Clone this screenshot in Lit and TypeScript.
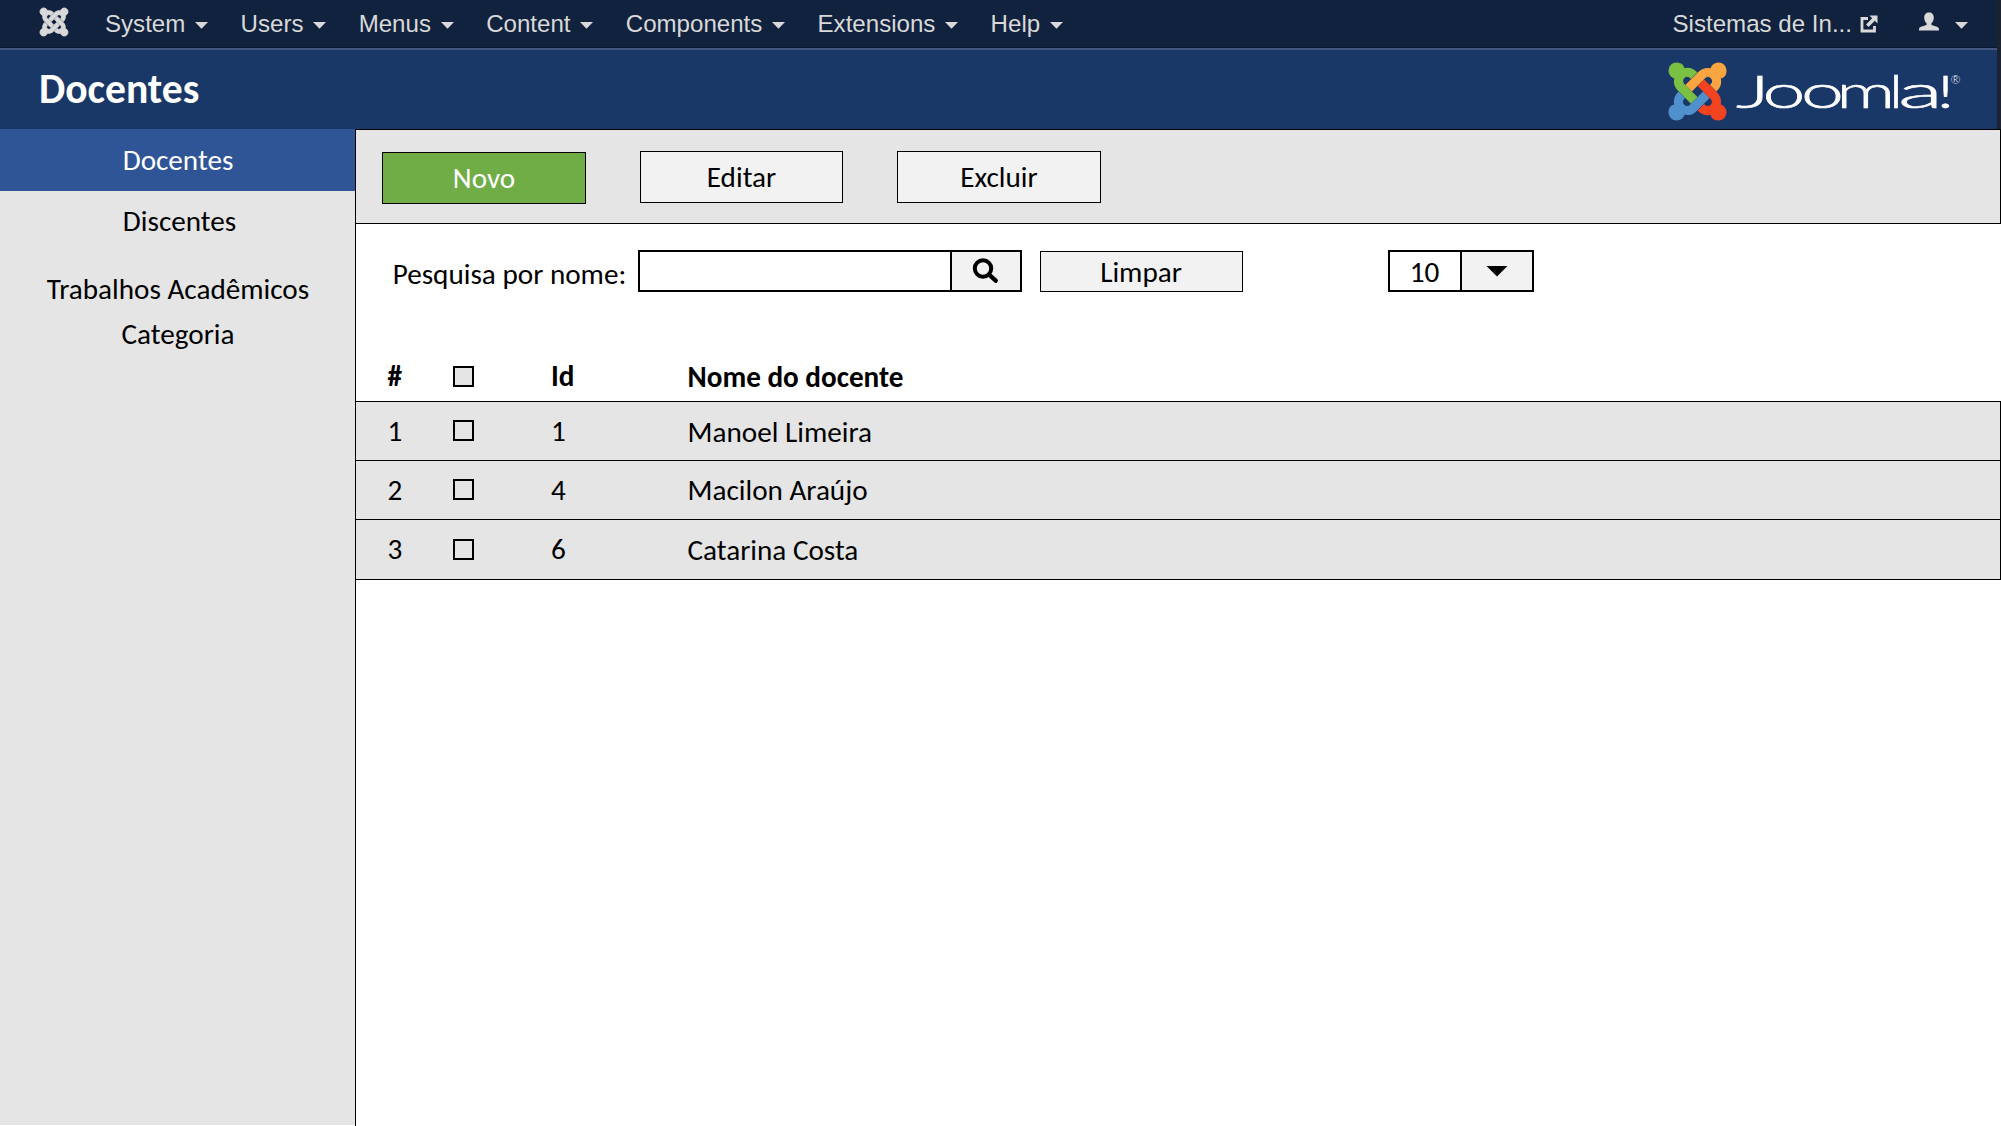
import { LitElement, html, css, svg } from "lit";
import { customElement, state } from "lit/decorators.js";

interface Teacher {
  id: number;
  name: string;
}

const MENUS = ["System", "Users", "Menus", "Content", "Components", "Extensions", "Help"];

const TEACHERS: Teacher[] = [
  { id: 1, name: "Manoel Limeira" },
  { id: 4, name: "Macilon Araújo" },
  { id: 6, name: "Catarina Costa" },
];

// One arm of the Joomla knot; the other three are quarter turns of it.
const ARM =
  "M16.719 14.759L14.22 17.26l-2.37 2.37-.462.466c-1.368 1.365-3.297 1.83-5.047 1.397-.327 1.424-1.604 2.49-3.13 2.49C1.438 23.983 0 22.547 0 20.772c0-1.518 1.055-2.789 2.469-3.123-.446-1.76.016-3.705 1.396-5.08l.179-.18 2.37 2.37-.184.181c-.769.779-.769 2.024 0 2.789.771.78 2.022.78 2.787 0l.465-.465 2.367-2.371 2.502-2.506z";

const knot = (cls: string, colors: string[]) => html`
  <svg class="knot ${cls}" viewBox="0 0 24 24">
    ${colors.map(
      (c, i) => svg`<path d=${ARM} fill=${c} stroke=${c} transform="rotate(${i * 90} 12 12)"></path>`,
    )}
  </svg>
`;

const caret = html`<svg class="caret" viewBox="0 0 13 7"><path d="M0 0h13L6.5 6.8z" fill="#d9d9d9"></path></svg>`;

@customElement("app-root")
export class AppRoot extends LitElement {
  @state() private active = "Docentes";

  static styles = css`
    :host {
      display: block;
      width: 2001px;
      height: 1126px;
      overflow: hidden;
      background: #fff;
      color: #000;
      font: 29.18px/35px Carlito, Calibri, Lato, sans-serif;
    }
    * {
      box-sizing: border-box;
    }
    svg {
      display: block;
      flex: none;
    }
    .page {
      display: flex;
      flex-direction: column;
      height: 1126px;
    }
    .top {
      background: #1a3867;
      border-right: 4px solid #1b2230;
      height: 129px;
      flex: none;
    }
    .menubar {
      display: flex;
      align-items: flex-start;
      height: 50px;
      padding: 10px 29px 0 40px;
      background: linear-gradient(#10223e 0 47px, #0b1730 47px 48px, #415782 48px 50px);
      color: #d9d9d9;
      font: 24.1px/27px "Liberation Sans", Arial, sans-serif;
    }
    .knot {
      overflow: visible;
      stroke-width: 0.5;
    }
    .brand {
      width: 28px;
      height: 28px;
      margin: -2px 37px 0 0;
      stroke-width: 0.8;
    }
    .menu {
      display: flex;
      margin-right: 32.5px;
    }
    .caret {
      width: 13px;
      height: 7px;
      margin: 12px 0 0 9.7px;
    }
    .site {
      display: flex;
      margin-left: auto;
    }
    .external {
      width: 18px;
      height: 18px;
      margin: 5px 41px 0 8px;
    }
    .user {
      width: 20px;
      height: 19px;
      margin-top: 2px;
    }
    .site .caret {
      margin-left: 16px;
    }
    .banner {
      display: flex;
      justify-content: space-between;
      align-items: flex-start;
      height: 79px;
      padding: 17px 35px 0 39px;
    }
    h1 {
      margin: 0;
      color: #fff;
      font-size: 41.6px;
      line-height: 43px;
      font-weight: 700;
    }
    .logo {
      display: flex;
      margin-top: -4px;
    }
    .mark {
      width: 57px;
      height: 57px;
      margin-right: 10px;
    }
    .word {
      width: 226px;
      height: 58px;
    }
    .word text {
      fill: #fff;
      font-family: Lato, sans-serif;
      font-weight: 300;
    }
    .wordmark {
      stroke: #fff;
      stroke-width: 0.6;
    }
    .body {
      display: flex;
      flex: 1;
    }
    .side {
      width: 355px;
      height: 996px;
      background: #e5e5e5;
      text-align: center;
      flex: none;
    }
    .item {
      padding-left: 1px;
    }
    .item.active {
      height: 62px;
      padding-top: 14px;
      background: #2f5597;
      color: #fff;
    }
    .item.discentes {
      padding: 13px 0 0 4px;
    }
    .item.trabalhos {
      padding-top: 33px;
    }
    .item.categoria {
      padding-top: 10px;
    }
    .main {
      flex: 1;
      border-left: 1px solid #000;
    }
    .toolbar {
      display: flex;
      height: 95px;
      padding: 21px 0 0 26px;
      background: #e5e5e5;
      border: solid #000;
      border-width: 1px 1px 1px 0;
    }
    .btn {
      width: 203px;
      height: 52px;
      padding-top: 8px;
      border: 1px solid #000;
      background: #f2f2f2;
      text-align: center;
    }
    .btn.new {
      width: 204px;
      margin: 1px 54px 0 0;
      background: #70ad47;
      color: #fff;
    }
    .btn.delete {
      width: 204px;
      margin-left: 54px;
    }
    .filters {
      display: flex;
      align-items: flex-start;
      height: 128px;
      padding: 26px 0 0 36px;
    }
    .label {
      width: 246px;
      padding: 7px 0 0 0.7px;
      white-space: nowrap;
    }
    .group {
      display: flex;
      height: 42px;
      border: 2px solid #000;
    }
    .field {
      width: 310px;
      background: #fff;
    }
    .addon {
      display: flex;
      align-items: flex-start;
      border-left: 2px solid #000;
      background: #f2f2f2;
    }
    .search {
      width: 68px;
      height: 38px;
    }
    .btn.clear {
      height: 41px;
      margin: 1px 145px 0 18px;
      padding: 3px 1px 0 0;
    }
    .count {
      width: 70px;
      padding: 3px 1px 0 0;
      text-align: center;
    }
    .drop {
      width: 70px;
      height: 38px;
    }
    .row {
      display: grid;
      grid-template-columns: 65.5px 98px 136.5px 1fr;
      align-items: start;
      height: 59px;
      padding-left: 31.5px;
      background: #e5e5e5;
      border: solid #000;
      border-width: 1px 1px 0 0;
    }
    .row.last {
      height: 61px;
      border-bottom-width: 1px;
    }
    .row.head {
      height: 49px;
      border: 0;
      background: none;
      font-weight: 700;
    }
    .cell {
      padding-top: 12px;
    }
    .name {
      padding-top: 13px;
    }
    .name.mid {
      padding-top: 12px;
    }
    .head .cell {
      padding-top: 7px;
    }
    .head .name {
      padding-top: 8px;
    }
    .check {
      width: 21px;
      height: 21px;
      margin-top: 18px;
      border: 2px solid #000;
    }
    .last .check {
      margin-top: 19px;
    }
    .head .check {
      margin-top: 14px;
      background: #e5e5e5;
    }
  `;

  private item(label: string, cls: string) {
    return html`<div
      class="item ${cls} ${this.active === label ? "active" : ""}"
      @click=${() => (this.active = label)}
    >${label}</div>`;
  }

  private row(t: Teacher, i: number) {
    const last = i === TEACHERS.length - 1;
    return html`
      <div class="row ${last ? "last" : ""}">
        <div class="cell">${i + 1}</div>
        <div class="check"></div>
        <div class="cell">${t.id}</div>
        <div class="name ${i === 1 ? "mid" : ""}">${t.name}</div>
      </div>
    `;
  }

  render() {
    return html`
      <div class="page">
        <header class="top">
          <nav class="menubar">
            ${knot("brand", ["#d9d9d9", "#d9d9d9", "#d9d9d9", "#d9d9d9"])}
            ${MENUS.map((m) => html`<div class="menu">${m}${caret}</div>`)}
            <div class="site">
              Sistemas de In...
              <svg class="external" viewBox="0 0 18 18">
                <path d="M8 3.5H2V16h12.5v-5" fill="none" stroke="#d9d9d9" stroke-width="2.8"></path>
                <path d="M9.5 0.5H17.5V8.5L14.8 5.8L8.6 12L6 9.4L12.2 3.2z" fill="#d9d9d9"></path>
              </svg>
              <svg class="user" viewBox="0 0 20 19">
                <path
                  d="M10 0.5c3 0 4.8 2.1 4.8 5 0 2.6-1 4.6-2.4 5.8v1.5c1 1 6.6 1.7 7.3 3.3.3.7.3 1.6.3 2.4H0c0-.8 0-1.7.3-2.4.7-1.6 6.3-2.300 7.300-3.300v-1.500C6.200 10.100 5.200 8.100 5.200 5.500c0-2.900 1.800-5 4.800-5z"
                  fill="#d9d9d9"
                ></path>
              </svg>
              ${caret}
            </div>
          </nav>
          <div class="banner">
            <h1>Docentes</h1>
            <div class="logo">
              ${knot("mark", ["#5091cd", "#7ac143", "#f9a541", "#f44321"])}
              <svg class="word" viewBox="0 0 226 58">
                <text class="wordmark" y="44.8" font-size="46"
                  ><tspan x="0" textLength="34" lengthAdjust="spacingAndGlyphs">J</tspan
                  ><tspan x="26.5" textLength="43" lengthAdjust="spacingAndGlyphs">o</tspan
                  ><tspan x="65" textLength="43" lengthAdjust="spacingAndGlyphs">o</tspan
                  ><tspan x="100.5" textLength="58.5" lengthAdjust="spacingAndGlyphs">m</tspan
                  ><tspan x="153.5" textLength="13" lengthAdjust="spacingAndGlyphs">l</tspan
                  ><tspan x="162" textLength="45" lengthAdjust="spacingAndGlyphs">a</tspan
                  ><tspan x="200.5" textLength="18" lengthAdjust="spacingAndGlyphs">!</tspan
                ></text>
                <text x="214.5" y="20.5" font-size="12">®</text>
              </svg>
            </div>
          </div>
        </header>
        <div class="body">
          <aside class="side">
            ${this.item("Docentes", "docentes")} ${this.item("Discentes", "discentes")}
            ${this.item("Trabalhos Acadêmicos", "trabalhos")} ${this.item("Categoria", "categoria")}
          </aside>
          <main class="main">
            <div class="toolbar">
              <div class="btn new">Novo</div>
              <div class="btn">Editar</div>
              <div class="btn delete">Excluir</div>
            </div>
            <div class="filters">
              <div class="label">Pesquisa por nome:</div>
              <div class="group">
                <div class="field"></div>
                <div class="addon">
                  <svg class="search" viewBox="0 0 68 38">
                    <circle cx="31" cy="16.5" r="8.2" fill="none" stroke="#000" stroke-width="4"></circle>
                    <path d="M37 22.5L43.7 28.7" stroke="#000" stroke-width="4.4" stroke-linecap="round"></path>
                  </svg>
                </div>
              </div>
              <div class="btn clear">Limpar</div>
              <div class="group">
                <div class="count">10</div>
                <div class="addon">
                  <svg class="drop" viewBox="0 0 70 38"><path d="M24.5 14h21L35 24.5z"></path></svg>
                </div>
              </div>
            </div>
            <div class="row head">
              <div class="cell">#</div>
              <div class="check"></div>
              <div class="cell">Id</div>
              <div class="name">Nome do docente</div>
            </div>
            ${TEACHERS.map((t, i) => this.row(t, i))}
          </main>
        </div>
      </div>
    `;
  }
}
